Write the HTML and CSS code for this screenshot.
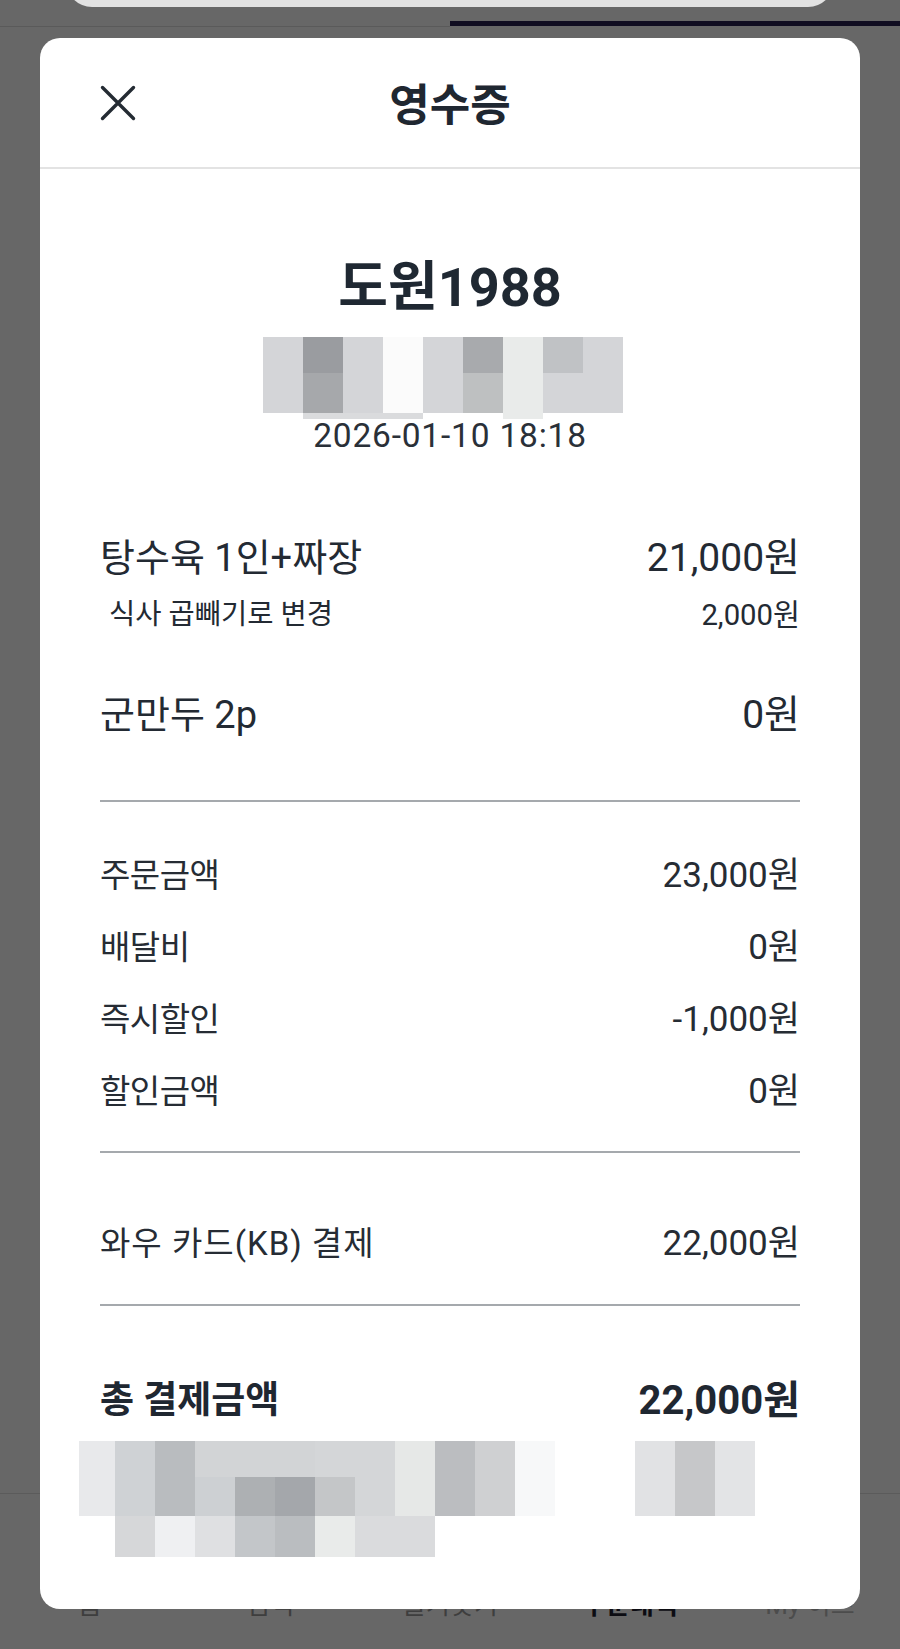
FILE: index.html
```html
<!DOCTYPE html>
<html lang="ko">
<head>
<meta charset="utf-8">
<title>영수증</title>
<link rel="stylesheet" href="styles.css">
</head>
<body>
  <div class="appbar">
    <div class="search"></div>
  </div>
  <div class="tabs">
    <div class="tab"></div>
    <div class="tab tab-active"></div>
  </div>
  <main class="page"></main>
  <nav class="nav">
    <div class="nav-item">홈</div>
    <div class="nav-item">검색</div>
    <div class="nav-item">즐겨찾기</div>
    <div class="nav-item nav-active">주문내역</div>
    <div class="nav-item nav-light">My 이츠</div>
  </nav>

  <section class="modal">
    <header class="modal-head">
      <button class="close" aria-label="닫기">
        <svg viewBox="0 0 36 36" width="36" height="36"><path d="M2.5 2.5 L33.5 33.5 M33.5 2.5 L2.5 33.5" fill="none" stroke="#242b33" stroke-width="3.4" stroke-linecap="round"/></svg>
      </button>
      <h1 class="title">영수증</h1>
      <span></span>
    </header>

    <div class="modal-body">
      <div class="store">도원1988</div>
      <div class="mosaic mosaic-top">
        <i class="a1"></i><i class="a2"></i><i class="a1"></i><i class="a4"></i><i class="a1"></i><i class="a5"></i><i class="a6"></i><i class="a7"></i><i class="a1"></i>
        <i class="a1"></i><i class="a8"></i><i class="a1"></i><i class="a4"></i><i class="a1"></i><i class="a9"></i><i class="a6"></i><i class="a1"></i><i class="a1"></i>
        <i></i><i class="a3"></i><i class="a3"></i><i class="a3"></i><i></i><i></i><i class="a6"></i><i></i><i></i>
      </div>
      <div class="date">2026-01-10 18:18</div>

      <div class="items">
        <div class="item">
          <div class="row row-item"><span class="label">탕수육 1인+짜장</span><span class="amt">21,000원</span></div>
          <div class="row row-opt"><span class="label">식사 곱빼기로 변경</span><span class="amt">2,000원</span></div>
        </div>
        <div class="item">
          <div class="row row-item"><span class="label">군만두 2p</span><span class="amt">0원</span></div>
        </div>
      </div>

      <div class="rule rule-1"></div>

      <div class="summary">
        <div class="row row-sum"><span class="label">주문금액</span><span class="amt">23,000원</span></div>
        <div class="row row-sum"><span class="label">배달비</span><span class="amt">0원</span></div>
        <div class="row row-sum"><span class="label">즉시할인</span><span class="amt">-1,000원</span></div>
        <div class="row row-sum"><span class="label">할인금액</span><span class="amt">0원</span></div>
      </div>

      <div class="rule rule-2"></div>

      <div class="row row-sum row-pay"><span class="label label-pay">와우 카드(KB) 결제</span><span class="amt">22,000원</span></div>

      <div class="rule rule-3"></div>

      <div class="row row-total"><span class="label">총 결제금액</span><span class="amt">22,000원</span></div>

      <div class="mosaic mosaic-bottom">
        <i class="b1"></i><i class="b2"></i><i class="b3"></i><i class="b4"></i><i class="b4"></i><i class="b4"></i><i class="b5"></i><i class="b5"></i><i class="b6"></i><i class="b7"></i><i class="b8"></i><i class="b9"></i><i></i><i class="b21"></i><i class="b22"></i><i class="b23"></i>
        <i class="b1"></i><i class="b2"></i><i class="b3"></i><i class="b10"></i><i class="b11"></i><i class="b12"></i><i class="b13"></i><i class="b5"></i><i class="b6"></i><i class="b7"></i><i class="b8"></i><i class="b9"></i><i></i><i class="b21"></i><i class="b22"></i><i class="b23"></i>
        <i></i><i class="b14"></i><i class="b15"></i><i class="b16"></i><i class="b17"></i><i class="b18"></i><i class="b19"></i><i class="b20"></i><i class="b20"></i><i></i><i></i><i></i><i></i><i></i><i></i><i></i>
      </div>
    </div>
  </section>
</body>
</html>
```
FILE: styles.css
```css
* { box-sizing: border-box; }

body {
  margin: 0;
  width: 900px;
  height: 1649px;
  overflow: hidden;
  position: relative;
  display: flex;
  flex-direction: column;
  background: #676767;
  font-family: Roboto, "Noto Sans CJK KR", sans-serif;
  color: #232a33;
}

/* background page (under the dim overlay) */
.appbar {
  height: 21px;
  display: flex;
  justify-content: center;
  align-items: flex-end;
  overflow: hidden;
}
.search {
  width: 768px;
  height: 60px;
  margin-bottom: 14px;
  background: #e2e2e2;
  border-radius: 26px;
}
.tabs {
  display: flex;
  height: 6px;
}
.tab {
  flex: 1;
  border-bottom: 1px solid #5a5a5a;
}
.tab-active {
  border-bottom: 0;
  height: 5px;
  background: #100d21;
}
.page { flex: 1; }
.nav {
  height: 156px;
  border-top: 1px solid #5b5b5b;
  display: flex;
  padding-top: 96px;
}
.nav-item {
  flex: 1;
  text-align: center;
  font-size: 26px;
  line-height: 30px;
  color: #3e3e3e;
}
.nav-active { color: #0c0c12; font-weight: 700; }
.nav-light { color: #4c4c4c; }

/* modal */
.modal {
  position: absolute;
  left: 40px;
  top: 38px;
  width: 820px;
  height: 1571px;
  background: #fff;
  border-radius: 20px;
  overflow: hidden;
}
.modal-head {
  height: 131px;
  border-bottom: 2px solid #e3e3e3;
  display: grid;
  grid-template-columns: 1fr auto 1fr;
  align-items: center;
  padding: 0 60px;
}
.close {
  width: 36px;
  height: 36px;
  padding: 0;
  border: 0;
  background: none;
  display: block;
}
.close svg { display: block; }
.title {
  margin: 6px 0 0;
  font-size: 44px;
  line-height: 50px;
  font-weight: 700;
  letter-spacing: 0;
  color: #1f2731;
}

.modal-body {
  padding: 0 60px;
}
.store {
  margin-top: 89px;
  line-height: 60px;
  font-size: 54px;
  font-weight: 700;
  text-align: center;
  color: #1f2832;
}
.mosaic { display: grid; }
.mosaic i { display: block; }
.mosaic-top {
  margin: 19px 0 0 163px;
  grid-template-columns: repeat(9, 40px);
  grid-template-rows: 36px 40px 6px;
}
.a1 { background: #d4d5d8; }
.a2 { background: #9a9ca0; }
.a3 { background: #dadbdd; }
.a4 { background: #fbfbfb; }
.a5 { background: #a8aaad; }
.a6 { background: #e9ebea; }
.a7 { background: #c0c2c5; }
.a8 { background: #a6a8ab; }
.a9 { background: #bec0c1; }

.date {
  line-height: 34px;
  font-size: 33.5px;
  text-align: center;
  letter-spacing: 0.8px;
  color: #2a3038;
}

.row {
  display: flex;
  justify-content: space-between;
  align-items: center;
}
.items { margin-top: 80px; }
.item + .item { margin-top: 58px; }
.row-item { line-height: 50px; }
.row-item .label { font-size: 38px; }
.row-item .amt { font-size: 39px; }
.row-opt {
  margin-top: 15px;
  line-height: 34px;
  padding-left: 9px;
}
.row-opt .label { font-size: 28.5px; }
.row-opt .amt { font-size: 29.3px; }

.rule {
  height: 2px;
  background: #a5a9ad;
}
.rule-1 { margin-top: 60px; }
.summary { margin-top: 38px; }
.row-sum { line-height: 72px; }
.row-sum .label { font-size: 33px; letter-spacing: -0.5px; color: #262c34; }
.row-sum .amt { font-size: 35px; color: #262c34; }
.rule-2 { margin-top: 23px; }
.row-pay { margin-top: 55px; }
.row-sum .label-pay { letter-spacing: 1px; }
.rule-3 { margin-top: 24px; }
.row-total {
  margin-top: 65px;
  line-height: 60px;
  font-weight: 700;
  color: #1f2731;
}
.row-total .label { font-size: 37px; }
.row-total .amt { font-size: 40px; }

.mosaic-bottom {
  margin: 10px 0 0 -21px;
  grid-template-columns: 36px repeat(11, 40px) 80px repeat(3, 40px);
  grid-template-rows: 36px 39px 41px;
}
.b1 { background: #e8e9eb; }
.b2 { background: #cfd2d5; }
.b3 { background: #b9bcbf; }
.b4 { background: #d2d4d6; }
.b5 { background: #d4d6d8; }
.b6 { background: #e6e8e7; }
.b7 { background: #bbbdc0; }
.b8 { background: #cfd0d2; }
.b9 { background: #f7f8f9; }
.b10 { background: #cdd0d3; }
.b11 { background: #adb0b3; }
.b12 { background: #a4a7ab; }
.b13 { background: #c4c6c8; }
.b14 { background: #d6d7d9; }
.b15 { background: #eff0f2; }
.b16 { background: #dfe0e2; }
.b17 { background: #c3c6c9; }
.b18 { background: #babdc0; }
.b19 { background: #e9ebea; }
.b20 { background: #dadbdd; }
.b21 { background: #e1e2e4; }
.b22 { background: #c6c7c9; }
.b23 { background: #e3e4e6; }
```
